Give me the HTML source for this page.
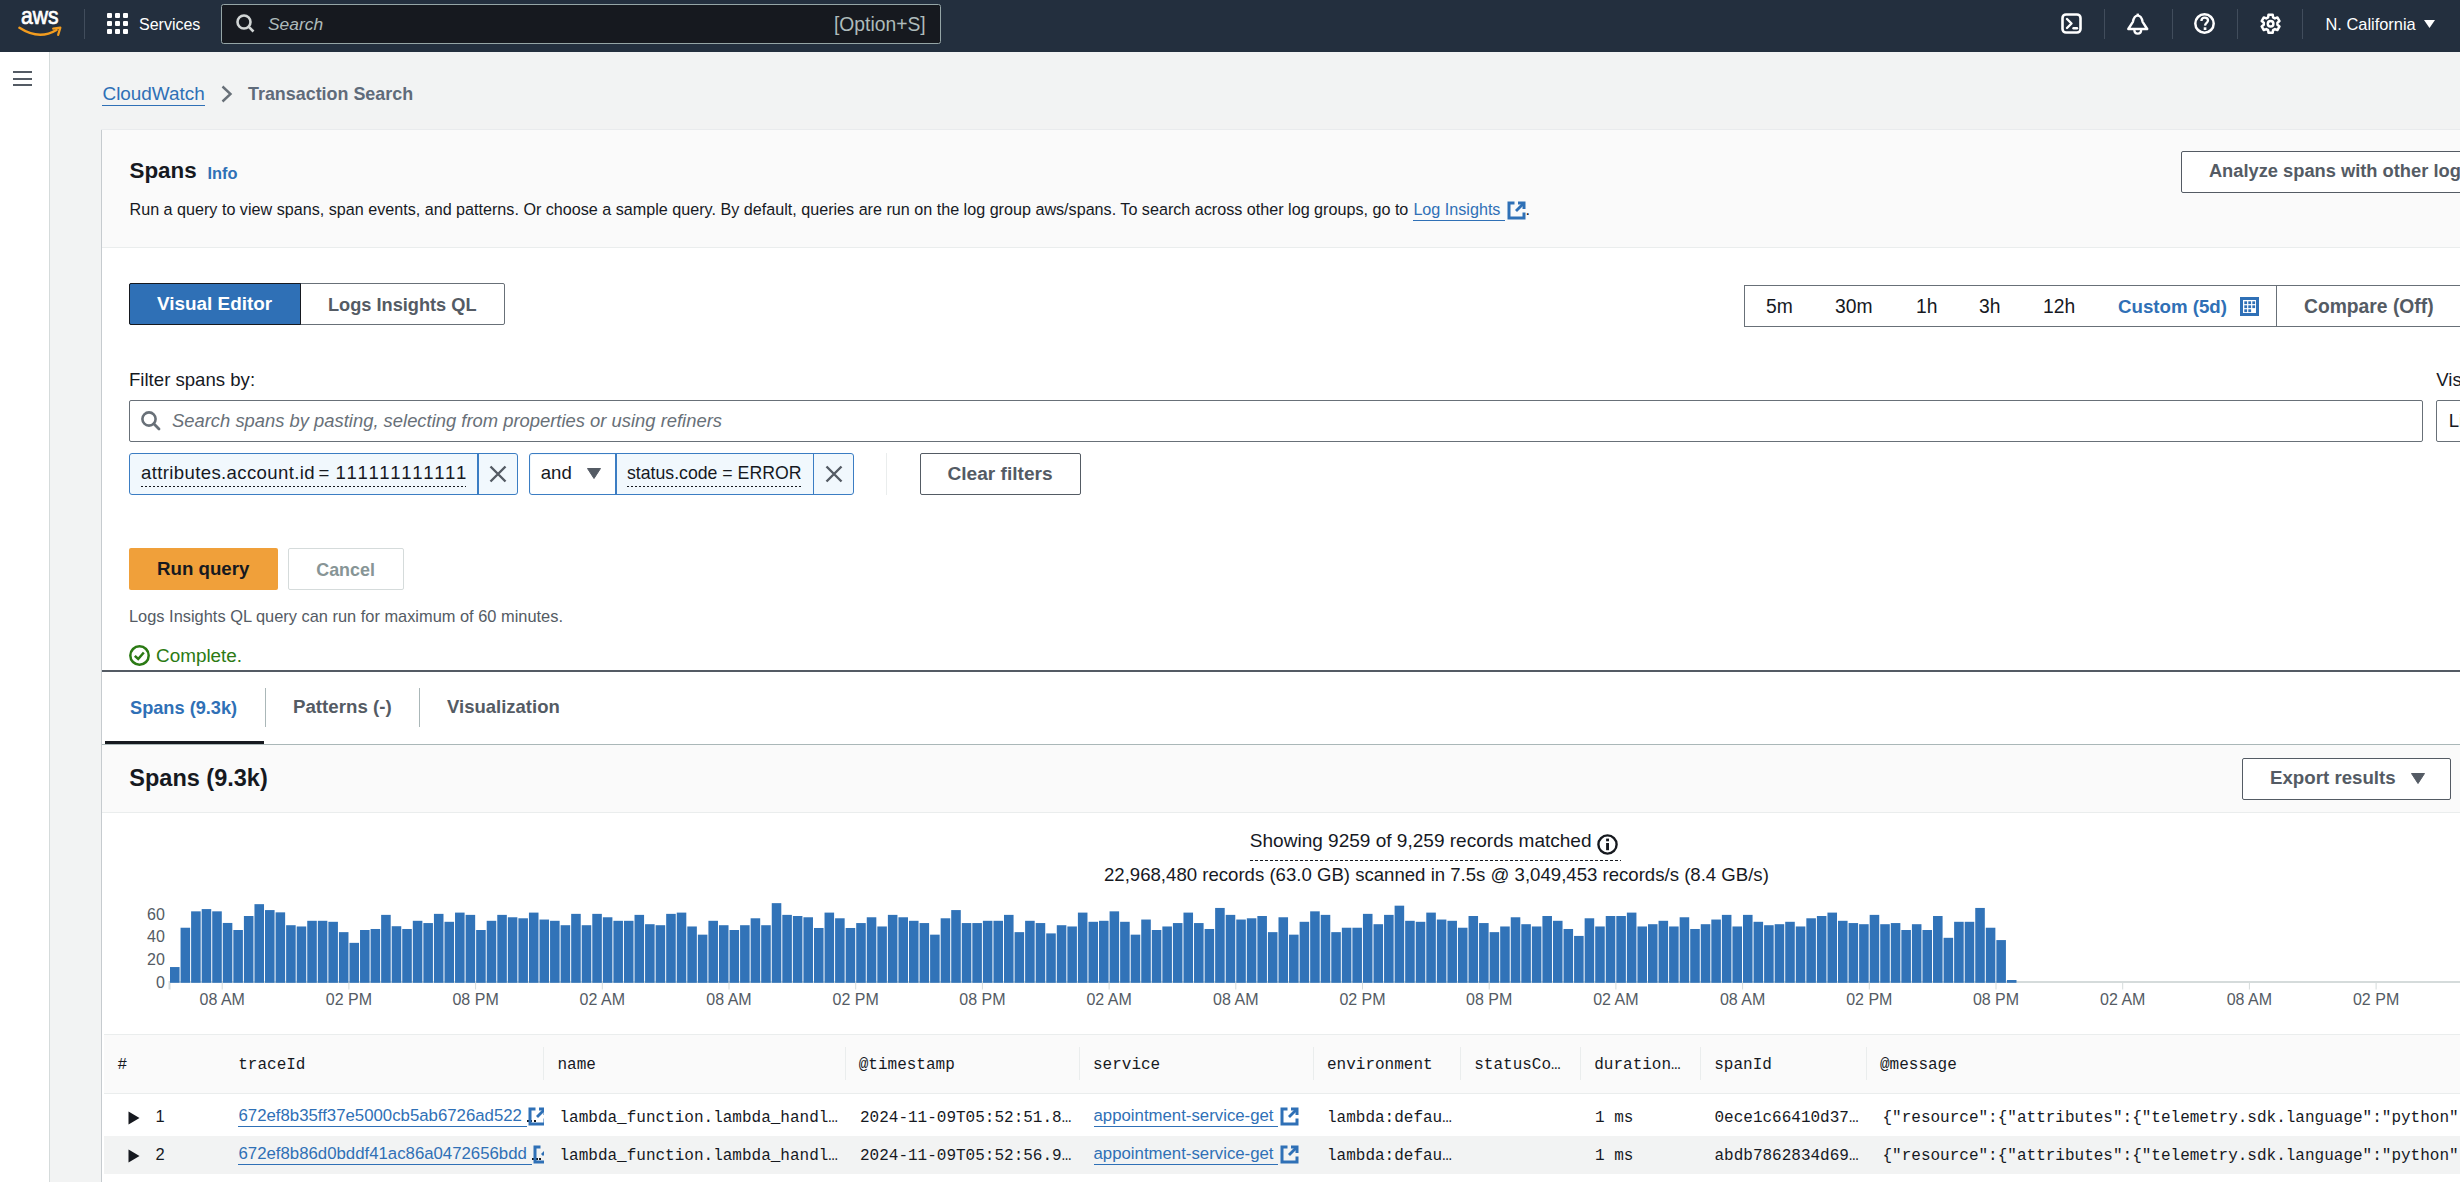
<!DOCTYPE html>
<html><head><meta charset="utf-8"><title>CloudWatch - Transaction Search</title>
<style>
html,body{margin:0;padding:0;width:2460px;height:1182px;overflow:hidden;background:#f2f3f3}
.r{position:absolute;display:block}
.t{position:absolute;white-space:pre;font-family:'Liberation Sans', sans-serif}
</style></head><body>
<div class="r" style="left:0px;top:0px;width:2460px;height:1182px;background:#f2f3f3"></div>
<div class="r" style="left:0px;top:52px;width:49px;height:1130px;background:#ffffff"></div>
<div class="r" style="left:49px;top:52px;width:1px;height:1130px;background:#d5dbdb"></div>
<div class="r" style="left:13px;top:71px;width:19px;height:2px;background:#545b64"></div>
<div class="r" style="left:13px;top:77.6px;width:19px;height:2px;background:#545b64"></div>
<div class="r" style="left:13px;top:84.4px;width:19px;height:2px;background:#545b64"></div>
<div class="r" style="left:0px;top:0px;width:2460px;height:52px;background:#232f3e"></div>
<svg class="r" style="left:17px;top:8px;" width="48" height="32" viewBox="0 0 48 32"><text x="4" y="16" font-family="Liberation Sans" font-size="23.5" fill="#ffffff" stroke="#ffffff" stroke-width="0.7" textLength="37.5" lengthAdjust="spacingAndGlyphs">aws</text>
<path d="M2.5 19.8 Q22 32.5 39.5 22" stroke="#f29c1f" stroke-width="2.5" fill="none" stroke-linecap="round"/>
<path d="M36.2 20.6 L43.3 19.6 L41.2 26.8" stroke="#f29c1f" stroke-width="2.3" fill="none" stroke-linecap="round" stroke-linejoin="round"/></svg>
<div class="r" style="left:84px;top:9px;width:1px;height:30px;background:#414d5c"></div>
<div class="r" style="left:107px;top:13px;width:5px;height:5px;background:#ffffff;border-radius:1px"></div>
<div class="r" style="left:107px;top:21px;width:5px;height:5px;background:#ffffff;border-radius:1px"></div>
<div class="r" style="left:107px;top:29px;width:5px;height:5px;background:#ffffff;border-radius:1px"></div>
<div class="r" style="left:115px;top:13px;width:5px;height:5px;background:#ffffff;border-radius:1px"></div>
<div class="r" style="left:115px;top:21px;width:5px;height:5px;background:#ffffff;border-radius:1px"></div>
<div class="r" style="left:115px;top:29px;width:5px;height:5px;background:#ffffff;border-radius:1px"></div>
<div class="r" style="left:123px;top:13px;width:5px;height:5px;background:#ffffff;border-radius:1px"></div>
<div class="r" style="left:123px;top:21px;width:5px;height:5px;background:#ffffff;border-radius:1px"></div>
<div class="r" style="left:123px;top:29px;width:5px;height:5px;background:#ffffff;border-radius:1px"></div>
<div class="t" style="left:139.00px;top:16.50px;font-size:16px;line-height:16px;color:#ffffff;font-weight:normal;font-family:'Liberation Sans', sans-serif;">Services</div>
<div class="r" style="left:221px;top:4px;width:719.5px;height:39.5px;background:#16191f;border:1px solid #95a5a6;border-radius:2.5px;box-sizing:border-box"></div>
<svg class="r" style="left:235px;top:13px;" width="22" height="22" viewBox="0 0 22 22"><circle cx="9" cy="9" r="6.5" stroke="#d1d5d5" stroke-width="2.6" fill="none"/><path d="M13.8 13.8 L18.5 18.5" stroke="#d1d5d5" stroke-width="2.6"/></svg>
<div class="t" style="left:268.00px;top:16.30px;font-size:17.4px;line-height:17.4px;color:#aebbbb;font-weight:normal;font-family:'Liberation Sans', sans-serif;font-style:italic;">Search</div>
<div class="t" style="left:834.00px;top:14.85px;font-size:19.3px;line-height:19.3px;color:#aebbbb;font-weight:normal;font-family:'Liberation Sans', sans-serif;">[Option+S]</div>
<svg class="r" style="left:2061px;top:13px;" width="21" height="21" viewBox="0 0 21 21"><rect x="1.5" y="1.5" width="18" height="18" rx="3.5" stroke="#fff" stroke-width="2.6" fill="none"/><path d="M6 6 L10.5 10.5 L6 15" stroke="#fff" stroke-width="2.4" fill="none" stroke-linecap="round" stroke-linejoin="round"/><path d="M12.5 15.2 L16 15.2" stroke="#fff" stroke-width="2.4" stroke-linecap="round"/></svg>
<div class="r" style="left:2104px;top:9px;width:1px;height:30px;background:#414d5c"></div>
<svg class="r" style="left:2127px;top:13px;" width="22" height="22" viewBox="0 0 22 22"><path d="M1.3 16 L20.2 16 L15.6 8.8 C14.8 4.6 13.3 2.6 10.75 2.6 C8.2 2.6 6.7 4.6 5.9 8.8 Z" stroke="#fff" stroke-width="2.4" fill="none" stroke-linejoin="round"/><path d="M10.75 0.6 L10.75 2.6" stroke="#fff" stroke-width="2.4"/><path d="M7.3 16.5 C7.3 19.7 8.9 20.6 10.75 20.6 C12.6 20.6 14.2 19.7 14.2 16.5" stroke="#fff" stroke-width="2.3" fill="none"/></svg>
<div class="r" style="left:2172px;top:9px;width:1px;height:30px;background:#414d5c"></div>
<svg class="r" style="left:2194px;top:13px;" width="22" height="22" viewBox="0 0 22 22"><circle cx="10.5" cy="10.5" r="9.2" stroke="#fff" stroke-width="2.5" fill="none"/><path d="M7.4 8 C7.4 5.9 9 4.6 10.8 4.6 C12.7 4.6 14 5.9 14 7.6 C14 9.8 11.2 10.1 11 12.6" stroke="#fff" stroke-width="2.3" fill="none"/><rect x="9.7" y="14.3" width="2.7" height="2.7" fill="#fff"/></svg>
<div class="r" style="left:2237px;top:9px;width:1px;height:30px;background:#414d5c"></div>
<svg class="r" style="left:2260px;top:13px;" width="22" height="22" viewBox="0 0 22 22"><path d="M8.51 1.69 L12.69 1.69 L13.07 4.31 L14.94 5.39 L17.40 4.41 L19.49 8.03 L17.42 9.67 L17.42 11.83 L19.49 13.47 L17.40 17.09 L14.94 16.11 L13.07 17.19 L12.69 19.81 L8.51 19.81 L8.13 17.19 L6.26 16.11 L3.80 17.09 L1.71 13.47 L3.78 11.83 L3.78 9.67 L1.71 8.03 L3.80 4.41 L6.26 5.39 L8.13 4.31 Z" stroke="#fff" stroke-width="2.5" fill="none" stroke-linejoin="round"/><circle cx="10.6" cy="10.75" r="2.8" stroke="#fff" stroke-width="2.5" fill="none"/></svg>
<div class="r" style="left:2302px;top:9px;width:1px;height:30px;background:#414d5c"></div>
<div class="t" style="left:2325.50px;top:15.80px;font-size:16.4px;line-height:16.4px;color:#ffffff;font-weight:normal;font-family:'Liberation Sans', sans-serif;">N. California</div>
<svg class="r" style="left:2424px;top:20px;" width="11" height="8" viewBox="0 0 11 8"><path d="M0 0 L11 0 L5.5 8 Z" fill="#fff"/></svg>
<div class="t" style="left:102.50px;top:84.65px;font-size:18.9px;line-height:18.9px;color:#2f70b6;font-weight:normal;font-family:'Liberation Sans', sans-serif;">CloudWatch</div>
<div class="r" style="left:102px;top:104.5px;width:103px;height:1.5px;background:#2f70b6"></div>
<svg class="r" style="left:220px;top:85px;" width="14" height="18" viewBox="0 0 14 18"><path d="M2.5 1.5 L10.5 9 L2.5 16.5" stroke="#687078" stroke-width="2.4" fill="none"/></svg>
<div class="t" style="left:248.00px;top:85.65px;font-size:17.9px;line-height:17.9px;color:#5f6b7a;font-weight:bold;font-family:'Liberation Sans', sans-serif;">Transaction Search</div>
<div class="r" style="left:101px;top:130px;width:2359px;height:1052px;background:#ffffff"></div>
<div class="r" style="left:101px;top:129px;width:2359px;height:1px;background:#e9ebed"></div>
<div class="r" style="left:101px;top:130px;width:1px;height:1052px;background:#c6cbcf"></div>
<div class="r" style="left:102px;top:130px;width:2358px;height:117px;background:#fafafa"></div>
<div class="r" style="left:102px;top:247px;width:2358px;height:1px;background:#eaeded"></div>
<div class="t" style="left:129.50px;top:160.30px;font-size:22.4px;line-height:22.4px;color:#16191f;font-weight:bold;font-family:'Liberation Sans', sans-serif;">Spans</div>
<div class="t" style="left:207.50px;top:164.80px;font-size:16.4px;line-height:16.4px;color:#2f70b6;font-weight:bold;font-family:'Liberation Sans', sans-serif;">Info</div>
<div class="t" style="left:129.50px;top:200.93px;font-size:16.15px;line-height:16.15px;color:#16191f;font-weight:normal;font-family:'Liberation Sans', sans-serif;">Run a query to view spans, span events, and patterns. Or choose a sample query. By default, queries are run on the log group aws/spans. To search across other log groups, go to</div>
<div class="t" style="left:1413.40px;top:200.93px;font-size:16.15px;line-height:16.15px;color:#2f70b6;font-weight:normal;font-family:'Liberation Sans', sans-serif;">Log Insights</div>
<div class="r" style="left:1413px;top:219.5px;width:92px;height:1.5px;background:#2f70b6"></div>
<svg class="r" style="left:1506.5px;top:200.5px;" width="19" height="19" viewBox="0 0 19 19"><path d="M7.5 2 L2 2 L2 17 L17 17 L17 11.5" stroke="#2f70b6" stroke-width="3" fill="none"/><path d="M11 2 L17 2 L17 8" stroke="#2f70b6" stroke-width="3" fill="none"/><path d="M16.5 2.5 L9 10" stroke="#2f70b6" stroke-width="2.8"/></svg>
<div class="t" style="left:1525.50px;top:200.93px;font-size:16.15px;line-height:16.15px;color:#16191f;font-weight:normal;font-family:'Liberation Sans', sans-serif;">.</div>
<div class="r" style="left:2181px;top:151px;width:300px;height:42px;background:#ffffff;border:1.5px solid #545b64;border-radius:2px;box-sizing:border-box"></div>
<div class="t" style="left:2208.90px;top:161.85px;font-size:18.3px;line-height:18.3px;color:#545b64;font-weight:bold;font-family:'Liberation Sans', sans-serif;">Analyze spans with other log groups</div>
<div class="r" style="left:129px;top:283px;width:376px;height:42px;background:#ffffff;border:1.5px solid #687078;border-radius:2px;box-sizing:border-box"></div>
<div class="r" style="left:129px;top:283px;width:172px;height:42px;background:#2f70b6;border:1.5px solid #16191f;border-radius:2px 0 0 2px;box-sizing:border-box"></div>
<div class="t" style="left:157.00px;top:295.05px;font-size:18.9px;line-height:18.9px;color:#ffffff;font-weight:bold;font-family:'Liberation Sans', sans-serif;">Visual Editor</div>
<div class="t" style="left:328.00px;top:295.90px;font-size:18.2px;line-height:18.2px;color:#545b64;font-weight:bold;font-family:'Liberation Sans', sans-serif;">Logs Insights QL</div>
<div class="r" style="left:1744px;top:285px;width:533px;height:42px;background:#ffffff;border:1.5px solid #687078;box-sizing:border-box"></div>
<div class="t" style="left:1766.00px;top:297.45px;font-size:19.3px;line-height:19.3px;color:#16191f;font-weight:normal;font-family:'Liberation Sans', sans-serif;">5m</div>
<div class="t" style="left:1835.00px;top:297.45px;font-size:19.3px;line-height:19.3px;color:#16191f;font-weight:normal;font-family:'Liberation Sans', sans-serif;">30m</div>
<div class="t" style="left:1916.00px;top:297.45px;font-size:19.3px;line-height:19.3px;color:#16191f;font-weight:normal;font-family:'Liberation Sans', sans-serif;">1h</div>
<div class="t" style="left:1979.00px;top:297.45px;font-size:19.3px;line-height:19.3px;color:#16191f;font-weight:normal;font-family:'Liberation Sans', sans-serif;">3h</div>
<div class="t" style="left:2043.00px;top:297.45px;font-size:19.3px;line-height:19.3px;color:#16191f;font-weight:normal;font-family:'Liberation Sans', sans-serif;">12h</div>
<div class="t" style="left:2118.00px;top:297.75px;font-size:18.7px;line-height:18.7px;color:#2f70b6;font-weight:bold;font-family:'Liberation Sans', sans-serif;">Custom (5d)</div>
<svg class="r" style="left:2240px;top:297px;" width="19" height="19" viewBox="0 0 19 19"><rect x="1.5" y="1.5" width="16" height="16" stroke="#2f70b6" stroke-width="3" fill="none"/><rect x="4.3" y="4.3" width="2.8" height="2.8" fill="#2f70b6"/><rect x="8.3" y="4.3" width="2.8" height="2.8" fill="#2f70b6"/><rect x="12.3" y="4.3" width="2.8" height="2.8" fill="#2f70b6"/><rect x="4.3" y="8.3" width="2.8" height="2.8" fill="#2f70b6"/><rect x="8.3" y="8.3" width="2.8" height="2.8" fill="#2f70b6"/><rect x="12.3" y="8.3" width="2.8" height="2.8" fill="#2f70b6"/><rect x="4.3" y="12.3" width="2.8" height="2.8" fill="#2f70b6"/><rect x="8.3" y="12.3" width="2.8" height="2.8" fill="#2f70b6"/></svg>
<div class="r" style="left:2276px;top:285px;width:200px;height:42px;background:#ffffff;border:1.5px solid #687078;box-sizing:border-box"></div>
<div class="t" style="left:2304.00px;top:297.45px;font-size:19.3px;line-height:19.3px;color:#545b64;font-weight:bold;font-family:'Liberation Sans', sans-serif;">Compare (Off)</div>
<div class="t" style="left:129.00px;top:370.50px;font-size:18.6px;line-height:18.6px;color:#16191f;font-weight:normal;font-family:'Liberation Sans', sans-serif;">Filter spans by:</div>
<div class="t" style="left:2436.30px;top:370.50px;font-size:18.6px;line-height:18.6px;color:#16191f;font-weight:normal;font-family:'Liberation Sans', sans-serif;">Visualization</div>
<div class="r" style="left:129px;top:400px;width:2294px;height:42px;background:#ffffff;border:1.5px solid #687078;border-radius:2px;box-sizing:border-box"></div>
<svg class="r" style="left:140px;top:410px;" width="22" height="22" viewBox="0 0 22 22"><circle cx="9" cy="9" r="6.6" stroke="#687078" stroke-width="2.6" fill="none"/><path d="M13.8 13.8 L19 19" stroke="#687078" stroke-width="2.8" stroke-linecap="round"/></svg>
<div class="t" style="left:172.00px;top:412.30px;font-size:18.4px;line-height:18.4px;color:#687078;font-weight:normal;font-family:'Liberation Sans', sans-serif;font-style:italic;">Search spans by pasting, selecting from properties or using refiners</div>
<div class="r" style="left:2436px;top:400px;width:100px;height:42px;background:#ffffff;border:1.5px solid #687078;border-radius:2px;box-sizing:border-box"></div>
<div class="t" style="left:2448.70px;top:412.20px;font-size:18.6px;line-height:18.6px;color:#16191f;font-weight:normal;font-family:'Liberation Sans', sans-serif;">Line</div>
<div class="r" style="left:129px;top:453px;width:389px;height:42px;background:#f1f8fd;border:1.5px solid #3b7dc3;border-radius:3px;box-sizing:border-box"></div>
<div class="r" style="left:477px;top:453px;width:1.5px;height:42px;background:#3b7dc3"></div>
<div class="t" style="left:141.00px;top:463.70px;font-size:18.6px;line-height:18.6px;color:#16191f;font-weight:normal;font-family:'Liberation Sans', sans-serif;letter-spacing:0.36px;">attributes.account.id</div>
<div class="t" style="left:318.60px;top:463.70px;font-size:18.6px;line-height:18.6px;color:#16191f;font-weight:normal;font-family:'Liberation Sans', sans-serif;">=</div>
<div class="t" style="left:335.50px;top:463.70px;font-size:18.6px;line-height:18.6px;color:#16191f;font-weight:normal;font-family:'Liberation Sans', sans-serif;letter-spacing:0.62px;font-kerning:none;">111111111111</div>
<div class="r" style="left:141px;top:485.5px;width:325px;height:1.2px;background:repeating-linear-gradient(90deg,#16191f 0 2.4px,transparent 2.4px 4px)"></div>
<svg class="r" style="left:488.5px;top:464.5px;" width="18" height="18" viewBox="0 0 18 18"><path d="M1.5 1.5 L16.5 16.5 M16.5 1.5 L1.5 16.5" stroke="#545b64" stroke-width="2.4"/></svg>
<div class="r" style="left:529px;top:453px;width:325px;height:42px;background:#f1f8fd;border:1.5px solid #3b7dc3;border-radius:3px;box-sizing:border-box"></div>
<div class="r" style="left:530.5px;top:454.5px;width:85px;height:39px;background:#ffffff;border-radius:2px 0 0 2px"></div>
<div class="r" style="left:615px;top:453px;width:1.5px;height:42px;background:#3b7dc3"></div>
<div class="r" style="left:812.5px;top:453px;width:1.5px;height:42px;background:#3b7dc3"></div>
<div class="t" style="left:540.75px;top:464.20px;font-size:18.6px;line-height:18.6px;color:#16191f;font-weight:normal;font-family:'Liberation Sans', sans-serif;">and</div>
<svg class="r" style="left:587px;top:468px;" width="14" height="11" viewBox="0 0 14 11"><path d="M0.5 0.5 L13.5 0.5 L7 10.5 Z" fill="#545b64" stroke="#545b64" stroke-linejoin="round"/></svg>
<div class="t" style="left:627.00px;top:465.15px;font-size:17.7px;line-height:17.7px;color:#16191f;font-weight:normal;font-family:'Liberation Sans', sans-serif;">status.code = ERROR</div>
<div class="r" style="left:627px;top:485.5px;width:175px;height:1.2px;background:repeating-linear-gradient(90deg,#16191f 0 2.4px,transparent 2.4px 4px)"></div>
<svg class="r" style="left:824.5px;top:464.5px;" width="18" height="18" viewBox="0 0 18 18"><path d="M1.5 1.5 L16.5 16.5 M16.5 1.5 L1.5 16.5" stroke="#545b64" stroke-width="2.4"/></svg>
<div class="r" style="left:886px;top:453px;width:1px;height:42px;background:#eaeded"></div>
<div class="r" style="left:919.5px;top:453px;width:161px;height:41.5px;background:#ffffff;border:1.5px solid #545b64;border-radius:2px;box-sizing:border-box"></div>
<div class="t" style="left:947.50px;top:463.95px;font-size:19.1px;line-height:19.1px;color:#545b64;font-weight:bold;font-family:'Liberation Sans', sans-serif;">Clear filters</div>
<div class="r" style="left:129px;top:548px;width:149px;height:42px;background:#f0a03a;border-radius:2px"></div>
<div class="t" style="left:157.00px;top:560.40px;font-size:18.7px;line-height:18.7px;color:#16191f;font-weight:bold;font-family:'Liberation Sans', sans-serif;">Run query</div>
<div class="r" style="left:288px;top:548px;width:116px;height:42px;background:#ffffff;border:1.5px solid #d5dbdb;border-radius:2px;box-sizing:border-box"></div>
<div class="t" style="left:316.25px;top:562.05px;font-size:17.9px;line-height:17.9px;color:#879596;font-weight:bold;font-family:'Liberation Sans', sans-serif;">Cancel</div>
<div class="t" style="left:129.00px;top:608.30px;font-size:16.4px;line-height:16.4px;color:#545b64;font-weight:normal;font-family:'Liberation Sans', sans-serif;">Logs Insights QL query can run for maximum of 60 minutes.</div>
<svg class="r" style="left:129px;top:645px;" width="21" height="21" viewBox="0 0 21 21"><circle cx="10.5" cy="10.5" r="9.2" stroke="#2b7a14" stroke-width="2.5" fill="none"/><path d="M5.8 10.8 L9.2 14 L14.8 7.5" stroke="#2b7a14" stroke-width="2.5" fill="none"/></svg>
<div class="t" style="left:156.00px;top:646.55px;font-size:18.9px;line-height:18.9px;color:#2b7a14;font-weight:normal;font-family:'Liberation Sans', sans-serif;">Complete.</div>
<div class="r" style="left:102px;top:670px;width:2358px;height:1.5px;background:#545b64"></div>
<div class="t" style="left:130.00px;top:698.65px;font-size:18.2px;line-height:18.2px;color:#2f70b6;font-weight:bold;font-family:'Liberation Sans', sans-serif;">Spans (9.3k)</div>
<div class="r" style="left:265px;top:688px;width:1px;height:39px;background:#aab7b8"></div>
<div class="t" style="left:293.00px;top:697.90px;font-size:18.7px;line-height:18.7px;color:#545b64;font-weight:bold;font-family:'Liberation Sans', sans-serif;">Patterns (-)</div>
<div class="r" style="left:419px;top:688px;width:1px;height:39px;background:#aab7b8"></div>
<div class="t" style="left:447.00px;top:698.00px;font-size:18.5px;line-height:18.5px;color:#545b64;font-weight:bold;font-family:'Liberation Sans', sans-serif;">Visualization</div>
<div class="r" style="left:102px;top:744px;width:2358px;height:1px;background:#aab7b8"></div>
<div class="r" style="left:105px;top:741px;width:159px;height:3px;background:#16191f"></div>
<div class="r" style="left:102px;top:745px;width:2358px;height:67px;background:#fafafa"></div>
<div class="r" style="left:102px;top:812px;width:2358px;height:1px;background:#eaeded"></div>
<div class="t" style="left:129.30px;top:766.65px;font-size:23.5px;line-height:23.5px;color:#16191f;font-weight:bold;font-family:'Liberation Sans', sans-serif;">Spans (9.3k)</div>
<div class="r" style="left:2242px;top:758px;width:209px;height:42px;background:#ffffff;border:1.5px solid #545b64;border-radius:2px;box-sizing:border-box"></div>
<div class="t" style="left:2270.00px;top:768.85px;font-size:18.7px;line-height:18.7px;color:#545b64;font-weight:bold;font-family:'Liberation Sans', sans-serif;">Export results</div>
<svg class="r" style="left:2411px;top:773px;" width="14" height="11" viewBox="0 0 14 11"><path d="M0.5 0.5 L13.5 0.5 L7 10.5 Z" fill="#545b64" stroke="#545b64" stroke-linejoin="round"/></svg>
<div class="t" style="left:1249.80px;top:830.77px;font-size:19.05px;line-height:19.05px;color:#16191f;font-weight:normal;font-family:'Liberation Sans', sans-serif;">Showing 9259 of 9,259 records matched</div>
<div class="r" style="left:1250px;top:860px;width:371px;height:1.4px;background:repeating-linear-gradient(90deg,#16191f 0 3px,transparent 3px 5px)"></div>
<svg class="r" style="left:1597px;top:834px;" width="21" height="21" viewBox="0 0 21 21"><circle cx="10.5" cy="10.5" r="9.1" stroke="#16191f" stroke-width="2.4" fill="none"/><rect x="9.1" y="4.6" width="2.9" height="2.7" fill="#16191f"/><rect x="9.1" y="9" width="2.9" height="7.2" fill="#16191f"/></svg>
<div class="t" style="left:1104.00px;top:866.20px;font-size:18.6px;line-height:18.6px;color:#16191f;font-weight:normal;font-family:'Liberation Sans', sans-serif;">22,968,480 records (63.0 GB) scanned in 7.5s @ 3,049,453 records/s (8.4 GB/s)</div>
<svg class="r" style="left:0;top:0" width="2460" height="1182"><rect x="170" y="981" width="2290" height="2" fill="#d5dbdb"/><rect x="168.5" y="981" width="2" height="8.5" fill="#d5dbdb"/><rect x="221.70" y="983" width="1" height="6.5" fill="#d5dbdb"/><rect x="348.40" y="983" width="1" height="6.5" fill="#d5dbdb"/><rect x="475.10" y="983" width="1" height="6.5" fill="#d5dbdb"/><rect x="601.80" y="983" width="1" height="6.5" fill="#d5dbdb"/><rect x="728.50" y="983" width="1" height="6.5" fill="#d5dbdb"/><rect x="855.20" y="983" width="1" height="6.5" fill="#d5dbdb"/><rect x="981.90" y="983" width="1" height="6.5" fill="#d5dbdb"/><rect x="1108.60" y="983" width="1" height="6.5" fill="#d5dbdb"/><rect x="1235.30" y="983" width="1" height="6.5" fill="#d5dbdb"/><rect x="1362.00" y="983" width="1" height="6.5" fill="#d5dbdb"/><rect x="1488.70" y="983" width="1" height="6.5" fill="#d5dbdb"/><rect x="1615.40" y="983" width="1" height="6.5" fill="#d5dbdb"/><rect x="1742.10" y="983" width="1" height="6.5" fill="#d5dbdb"/><rect x="1868.80" y="983" width="1" height="6.5" fill="#d5dbdb"/><rect x="1995.50" y="983" width="1" height="6.5" fill="#d5dbdb"/><rect x="2122.20" y="983" width="1" height="6.5" fill="#d5dbdb"/><rect x="2248.90" y="983" width="1" height="6.5" fill="#d5dbdb"/><rect x="2375.60" y="983" width="1" height="6.5" fill="#d5dbdb"/><rect x="170.00" y="967.05" width="9.56" height="15.75" fill="#3173b8"/><rect x="180.56" y="927.73" width="9.56" height="55.07" fill="#3173b8"/><rect x="191.11" y="911.34" width="9.56" height="71.46" fill="#3173b8"/><rect x="201.67" y="909.08" width="9.56" height="73.72" fill="#3173b8"/><rect x="212.23" y="911.34" width="9.56" height="71.46" fill="#3173b8"/><rect x="222.78" y="922.94" width="9.56" height="59.86" fill="#3173b8"/><rect x="233.34" y="930.00" width="9.56" height="52.80" fill="#3173b8"/><rect x="243.90" y="916.01" width="9.56" height="66.79" fill="#3173b8"/><rect x="254.46" y="904.16" width="9.56" height="78.64" fill="#3173b8"/><rect x="265.01" y="910.08" width="9.56" height="72.72" fill="#3173b8"/><rect x="275.57" y="912.35" width="9.56" height="70.45" fill="#3173b8"/><rect x="286.13" y="925.21" width="9.56" height="57.59" fill="#3173b8"/><rect x="296.68" y="926.47" width="9.56" height="56.33" fill="#3173b8"/><rect x="307.24" y="920.80" width="9.56" height="62.00" fill="#3173b8"/><rect x="317.80" y="920.80" width="9.56" height="62.00" fill="#3173b8"/><rect x="328.36" y="921.80" width="9.56" height="61.00" fill="#3173b8"/><rect x="338.91" y="932.14" width="9.56" height="50.66" fill="#3173b8"/><rect x="349.47" y="942.85" width="9.56" height="39.95" fill="#3173b8"/><rect x="360.03" y="930.00" width="9.56" height="52.80" fill="#3173b8"/><rect x="370.58" y="928.99" width="9.56" height="53.81" fill="#3173b8"/><rect x="381.14" y="914.87" width="9.56" height="67.93" fill="#3173b8"/><rect x="391.70" y="926.22" width="9.56" height="56.58" fill="#3173b8"/><rect x="402.25" y="928.99" width="9.56" height="53.81" fill="#3173b8"/><rect x="412.81" y="920.80" width="9.56" height="62.00" fill="#3173b8"/><rect x="423.37" y="923.06" width="9.56" height="59.74" fill="#3173b8"/><rect x="433.93" y="913.86" width="9.56" height="68.94" fill="#3173b8"/><rect x="444.48" y="921.80" width="9.56" height="61.00" fill="#3173b8"/><rect x="455.04" y="912.60" width="9.56" height="70.20" fill="#3173b8"/><rect x="465.60" y="914.87" width="9.56" height="67.93" fill="#3173b8"/><rect x="476.15" y="930.00" width="9.56" height="52.80" fill="#3173b8"/><rect x="486.71" y="920.80" width="9.56" height="62.00" fill="#3173b8"/><rect x="497.27" y="914.87" width="9.56" height="67.93" fill="#3173b8"/><rect x="507.82" y="917.27" width="9.56" height="65.53" fill="#3173b8"/><rect x="518.38" y="918.28" width="9.56" height="64.52" fill="#3173b8"/><rect x="528.94" y="912.60" width="9.56" height="70.20" fill="#3173b8"/><rect x="539.50" y="919.54" width="9.56" height="63.26" fill="#3173b8"/><rect x="550.05" y="920.80" width="9.56" height="62.00" fill="#3173b8"/><rect x="560.61" y="925.21" width="9.56" height="57.59" fill="#3173b8"/><rect x="571.17" y="913.86" width="9.56" height="68.94" fill="#3173b8"/><rect x="581.72" y="925.21" width="9.56" height="57.59" fill="#3173b8"/><rect x="592.28" y="913.86" width="9.56" height="68.94" fill="#3173b8"/><rect x="602.84" y="917.27" width="9.56" height="65.53" fill="#3173b8"/><rect x="613.39" y="920.80" width="9.56" height="62.00" fill="#3173b8"/><rect x="623.95" y="920.80" width="9.56" height="62.00" fill="#3173b8"/><rect x="634.51" y="914.87" width="9.56" height="67.93" fill="#3173b8"/><rect x="645.07" y="924.20" width="9.56" height="58.60" fill="#3173b8"/><rect x="655.62" y="925.21" width="9.56" height="57.59" fill="#3173b8"/><rect x="666.18" y="913.86" width="9.56" height="68.94" fill="#3173b8"/><rect x="676.74" y="912.60" width="9.56" height="70.20" fill="#3173b8"/><rect x="687.29" y="926.47" width="9.56" height="56.33" fill="#3173b8"/><rect x="697.85" y="934.66" width="9.56" height="48.14" fill="#3173b8"/><rect x="708.41" y="920.80" width="9.56" height="62.00" fill="#3173b8"/><rect x="718.96" y="925.21" width="9.56" height="57.59" fill="#3173b8"/><rect x="729.52" y="930.00" width="9.56" height="52.80" fill="#3173b8"/><rect x="740.08" y="925.21" width="9.56" height="57.59" fill="#3173b8"/><rect x="750.63" y="918.28" width="9.56" height="64.52" fill="#3173b8"/><rect x="761.19" y="925.21" width="9.56" height="57.59" fill="#3173b8"/><rect x="771.75" y="903.15" width="9.56" height="79.65" fill="#3173b8"/><rect x="782.31" y="914.87" width="9.56" height="67.93" fill="#3173b8"/><rect x="792.86" y="916.01" width="9.56" height="66.79" fill="#3173b8"/><rect x="803.42" y="917.27" width="9.56" height="65.53" fill="#3173b8"/><rect x="813.98" y="927.98" width="9.56" height="54.82" fill="#3173b8"/><rect x="824.53" y="912.60" width="9.56" height="70.20" fill="#3173b8"/><rect x="835.09" y="918.28" width="9.56" height="64.52" fill="#3173b8"/><rect x="845.65" y="927.98" width="9.56" height="54.82" fill="#3173b8"/><rect x="856.21" y="923.06" width="9.56" height="59.74" fill="#3173b8"/><rect x="866.76" y="917.27" width="9.56" height="65.53" fill="#3173b8"/><rect x="877.32" y="926.47" width="9.56" height="56.33" fill="#3173b8"/><rect x="887.88" y="914.87" width="9.56" height="67.93" fill="#3173b8"/><rect x="898.43" y="917.27" width="9.56" height="65.53" fill="#3173b8"/><rect x="908.99" y="920.80" width="9.56" height="62.00" fill="#3173b8"/><rect x="919.55" y="923.06" width="9.56" height="59.74" fill="#3173b8"/><rect x="930.10" y="934.66" width="9.56" height="48.14" fill="#3173b8"/><rect x="940.66" y="918.28" width="9.56" height="64.52" fill="#3173b8"/><rect x="951.22" y="910.08" width="9.56" height="72.72" fill="#3173b8"/><rect x="961.77" y="923.06" width="9.56" height="59.74" fill="#3173b8"/><rect x="972.33" y="923.06" width="9.56" height="59.74" fill="#3173b8"/><rect x="982.89" y="920.80" width="9.56" height="62.00" fill="#3173b8"/><rect x="993.45" y="920.80" width="9.56" height="62.00" fill="#3173b8"/><rect x="1004.00" y="914.87" width="9.56" height="67.93" fill="#3173b8"/><rect x="1014.56" y="932.14" width="9.56" height="50.66" fill="#3173b8"/><rect x="1025.12" y="920.80" width="9.56" height="62.00" fill="#3173b8"/><rect x="1035.67" y="923.06" width="9.56" height="59.74" fill="#3173b8"/><rect x="1046.23" y="933.40" width="9.56" height="49.40" fill="#3173b8"/><rect x="1056.79" y="925.21" width="9.56" height="57.59" fill="#3173b8"/><rect x="1067.35" y="926.47" width="9.56" height="56.33" fill="#3173b8"/><rect x="1077.90" y="912.60" width="9.56" height="70.20" fill="#3173b8"/><rect x="1088.46" y="921.80" width="9.56" height="61.00" fill="#3173b8"/><rect x="1099.02" y="920.80" width="9.56" height="62.00" fill="#3173b8"/><rect x="1109.57" y="911.34" width="9.56" height="71.46" fill="#3173b8"/><rect x="1120.13" y="921.80" width="9.56" height="61.00" fill="#3173b8"/><rect x="1130.69" y="934.66" width="9.56" height="48.14" fill="#3173b8"/><rect x="1141.24" y="919.54" width="9.56" height="63.26" fill="#3173b8"/><rect x="1151.80" y="930.00" width="9.56" height="52.80" fill="#3173b8"/><rect x="1162.36" y="926.47" width="9.56" height="56.33" fill="#3173b8"/><rect x="1172.91" y="923.06" width="9.56" height="59.74" fill="#3173b8"/><rect x="1183.47" y="912.60" width="9.56" height="70.20" fill="#3173b8"/><rect x="1194.03" y="923.06" width="9.56" height="59.74" fill="#3173b8"/><rect x="1204.59" y="928.99" width="9.56" height="53.81" fill="#3173b8"/><rect x="1215.14" y="907.94" width="9.56" height="74.86" fill="#3173b8"/><rect x="1225.70" y="914.87" width="9.56" height="67.93" fill="#3173b8"/><rect x="1236.26" y="919.54" width="9.56" height="63.26" fill="#3173b8"/><rect x="1246.81" y="918.28" width="9.56" height="64.52" fill="#3173b8"/><rect x="1257.37" y="916.01" width="9.56" height="66.79" fill="#3173b8"/><rect x="1267.93" y="932.14" width="9.56" height="50.66" fill="#3173b8"/><rect x="1278.49" y="917.27" width="9.56" height="65.53" fill="#3173b8"/><rect x="1289.04" y="934.66" width="9.56" height="48.14" fill="#3173b8"/><rect x="1299.60" y="921.80" width="9.56" height="61.00" fill="#3173b8"/><rect x="1310.16" y="911.34" width="9.56" height="71.46" fill="#3173b8"/><rect x="1320.71" y="914.87" width="9.56" height="67.93" fill="#3173b8"/><rect x="1331.27" y="932.14" width="9.56" height="50.66" fill="#3173b8"/><rect x="1341.83" y="927.73" width="9.56" height="55.07" fill="#3173b8"/><rect x="1352.38" y="927.73" width="9.56" height="55.07" fill="#3173b8"/><rect x="1362.94" y="913.86" width="9.56" height="68.94" fill="#3173b8"/><rect x="1373.50" y="924.20" width="9.56" height="58.60" fill="#3173b8"/><rect x="1384.06" y="914.87" width="9.56" height="67.93" fill="#3173b8"/><rect x="1394.61" y="905.67" width="9.56" height="77.13" fill="#3173b8"/><rect x="1405.17" y="920.80" width="9.56" height="62.00" fill="#3173b8"/><rect x="1415.73" y="921.80" width="9.56" height="61.00" fill="#3173b8"/><rect x="1426.28" y="912.60" width="9.56" height="70.20" fill="#3173b8"/><rect x="1436.84" y="919.54" width="9.56" height="63.26" fill="#3173b8"/><rect x="1447.40" y="920.80" width="9.56" height="62.00" fill="#3173b8"/><rect x="1457.95" y="927.73" width="9.56" height="55.07" fill="#3173b8"/><rect x="1468.51" y="916.01" width="9.56" height="66.79" fill="#3173b8"/><rect x="1479.07" y="923.06" width="9.56" height="59.74" fill="#3173b8"/><rect x="1489.62" y="932.14" width="9.56" height="50.66" fill="#3173b8"/><rect x="1500.18" y="926.47" width="9.56" height="56.33" fill="#3173b8"/><rect x="1510.74" y="917.27" width="9.56" height="65.53" fill="#3173b8"/><rect x="1521.30" y="924.20" width="9.56" height="58.60" fill="#3173b8"/><rect x="1531.85" y="926.47" width="9.56" height="56.33" fill="#3173b8"/><rect x="1542.41" y="916.01" width="9.56" height="66.79" fill="#3173b8"/><rect x="1552.97" y="920.80" width="9.56" height="62.00" fill="#3173b8"/><rect x="1563.52" y="928.99" width="9.56" height="53.81" fill="#3173b8"/><rect x="1574.08" y="935.92" width="9.56" height="46.88" fill="#3173b8"/><rect x="1584.64" y="918.28" width="9.56" height="64.52" fill="#3173b8"/><rect x="1595.20" y="926.47" width="9.56" height="56.33" fill="#3173b8"/><rect x="1605.75" y="916.01" width="9.56" height="66.79" fill="#3173b8"/><rect x="1616.31" y="916.01" width="9.56" height="66.79" fill="#3173b8"/><rect x="1626.87" y="912.60" width="9.56" height="70.20" fill="#3173b8"/><rect x="1637.42" y="926.47" width="9.56" height="56.33" fill="#3173b8"/><rect x="1647.98" y="924.20" width="9.56" height="58.60" fill="#3173b8"/><rect x="1658.54" y="920.80" width="9.56" height="62.00" fill="#3173b8"/><rect x="1669.09" y="926.47" width="9.56" height="56.33" fill="#3173b8"/><rect x="1679.65" y="917.27" width="9.56" height="65.53" fill="#3173b8"/><rect x="1690.21" y="928.99" width="9.56" height="53.81" fill="#3173b8"/><rect x="1700.77" y="924.20" width="9.56" height="58.60" fill="#3173b8"/><rect x="1711.32" y="919.54" width="9.56" height="63.26" fill="#3173b8"/><rect x="1721.88" y="914.87" width="9.56" height="67.93" fill="#3173b8"/><rect x="1732.44" y="926.47" width="9.56" height="56.33" fill="#3173b8"/><rect x="1742.99" y="914.87" width="9.56" height="67.93" fill="#3173b8"/><rect x="1753.55" y="921.80" width="9.56" height="61.00" fill="#3173b8"/><rect x="1764.11" y="925.21" width="9.56" height="57.59" fill="#3173b8"/><rect x="1774.66" y="924.20" width="9.56" height="58.60" fill="#3173b8"/><rect x="1785.22" y="921.80" width="9.56" height="61.00" fill="#3173b8"/><rect x="1795.78" y="926.47" width="9.56" height="56.33" fill="#3173b8"/><rect x="1806.34" y="918.28" width="9.56" height="64.52" fill="#3173b8"/><rect x="1816.89" y="916.01" width="9.56" height="66.79" fill="#3173b8"/><rect x="1827.45" y="912.60" width="9.56" height="70.20" fill="#3173b8"/><rect x="1838.01" y="920.80" width="9.56" height="62.00" fill="#3173b8"/><rect x="1848.56" y="923.06" width="9.56" height="59.74" fill="#3173b8"/><rect x="1859.12" y="924.20" width="9.56" height="58.60" fill="#3173b8"/><rect x="1869.68" y="914.87" width="9.56" height="67.93" fill="#3173b8"/><rect x="1880.23" y="924.20" width="9.56" height="58.60" fill="#3173b8"/><rect x="1890.79" y="923.06" width="9.56" height="59.74" fill="#3173b8"/><rect x="1901.35" y="930.00" width="9.56" height="52.80" fill="#3173b8"/><rect x="1911.90" y="924.20" width="9.56" height="58.60" fill="#3173b8"/><rect x="1922.46" y="930.00" width="9.56" height="52.80" fill="#3173b8"/><rect x="1933.02" y="916.01" width="9.56" height="66.79" fill="#3173b8"/><rect x="1943.58" y="937.81" width="9.56" height="44.99" fill="#3173b8"/><rect x="1954.13" y="921.80" width="9.56" height="61.00" fill="#3173b8"/><rect x="1964.69" y="921.80" width="9.56" height="61.00" fill="#3173b8"/><rect x="1975.25" y="907.94" width="9.56" height="74.86" fill="#3173b8"/><rect x="1985.80" y="927.73" width="9.56" height="55.07" fill="#3173b8"/><rect x="1996.36" y="940.08" width="9.56" height="42.72" fill="#3173b8"/><rect x="2006.92" y="980.03" width="9.56" height="2.77" fill="#3173b8"/><text x="222.20" y="1005.3" text-anchor="middle" font-family="Liberation Sans" font-size="16" fill="#545b64">08 AM</text><text x="348.90" y="1005.3" text-anchor="middle" font-family="Liberation Sans" font-size="16" fill="#545b64">02 PM</text><text x="475.60" y="1005.3" text-anchor="middle" font-family="Liberation Sans" font-size="16" fill="#545b64">08 PM</text><text x="602.30" y="1005.3" text-anchor="middle" font-family="Liberation Sans" font-size="16" fill="#545b64">02 AM</text><text x="729.00" y="1005.3" text-anchor="middle" font-family="Liberation Sans" font-size="16" fill="#545b64">08 AM</text><text x="855.70" y="1005.3" text-anchor="middle" font-family="Liberation Sans" font-size="16" fill="#545b64">02 PM</text><text x="982.40" y="1005.3" text-anchor="middle" font-family="Liberation Sans" font-size="16" fill="#545b64">08 PM</text><text x="1109.10" y="1005.3" text-anchor="middle" font-family="Liberation Sans" font-size="16" fill="#545b64">02 AM</text><text x="1235.80" y="1005.3" text-anchor="middle" font-family="Liberation Sans" font-size="16" fill="#545b64">08 AM</text><text x="1362.50" y="1005.3" text-anchor="middle" font-family="Liberation Sans" font-size="16" fill="#545b64">02 PM</text><text x="1489.20" y="1005.3" text-anchor="middle" font-family="Liberation Sans" font-size="16" fill="#545b64">08 PM</text><text x="1615.90" y="1005.3" text-anchor="middle" font-family="Liberation Sans" font-size="16" fill="#545b64">02 AM</text><text x="1742.60" y="1005.3" text-anchor="middle" font-family="Liberation Sans" font-size="16" fill="#545b64">08 AM</text><text x="1869.30" y="1005.3" text-anchor="middle" font-family="Liberation Sans" font-size="16" fill="#545b64">02 PM</text><text x="1996.00" y="1005.3" text-anchor="middle" font-family="Liberation Sans" font-size="16" fill="#545b64">08 PM</text><text x="2122.70" y="1005.3" text-anchor="middle" font-family="Liberation Sans" font-size="16" fill="#545b64">02 AM</text><text x="2249.40" y="1005.3" text-anchor="middle" font-family="Liberation Sans" font-size="16" fill="#545b64">08 AM</text><text x="2376.10" y="1005.3" text-anchor="middle" font-family="Liberation Sans" font-size="16" fill="#545b64">02 PM</text><text x="164.9" y="919.60" text-anchor="end" font-family="Liberation Sans" font-size="16" fill="#545b64">60</text><text x="164.9" y="942.40" text-anchor="end" font-family="Liberation Sans" font-size="16" fill="#545b64">40</text><text x="164.9" y="965.30" text-anchor="end" font-family="Liberation Sans" font-size="16" fill="#545b64">20</text><text x="164.9" y="988.00" text-anchor="end" font-family="Liberation Sans" font-size="16" fill="#545b64">0</text></svg>
<div class="r" style="left:104px;top:1034px;width:2356px;height:1px;background:#eaeded"></div>
<div class="r" style="left:104px;top:1035px;width:2356px;height:58px;background:#fafafa"></div>
<div class="r" style="left:104px;top:1093px;width:2356px;height:1px;background:#eaeded"></div>
<div class="r" style="left:543.25px;top:1047px;width:1px;height:33px;background:#eaeded"></div>
<div class="r" style="left:844.5px;top:1047px;width:1px;height:33px;background:#eaeded"></div>
<div class="r" style="left:1078.75px;top:1047px;width:1px;height:33px;background:#eaeded"></div>
<div class="r" style="left:1312.5px;top:1047px;width:1px;height:33px;background:#eaeded"></div>
<div class="r" style="left:1459.5px;top:1047px;width:1px;height:33px;background:#eaeded"></div>
<div class="r" style="left:1579.5px;top:1047px;width:1px;height:33px;background:#eaeded"></div>
<div class="r" style="left:1699.5px;top:1047px;width:1px;height:33px;background:#eaeded"></div>
<div class="r" style="left:1866px;top:1047px;width:1px;height:33px;background:#eaeded"></div>
<div class="t" style="left:117.50px;top:1057.25px;font-size:16px;line-height:16px;color:#16191f;font-weight:normal;font-family:'Liberation Mono', monospace;">#</div>
<div class="t" style="left:238.25px;top:1057.25px;font-size:16px;line-height:16px;color:#16191f;font-weight:normal;font-family:'Liberation Mono', monospace;">traceId</div>
<div class="t" style="left:557.50px;top:1057.25px;font-size:16px;line-height:16px;color:#16191f;font-weight:normal;font-family:'Liberation Mono', monospace;">name</div>
<div class="t" style="left:858.75px;top:1057.25px;font-size:16px;line-height:16px;color:#16191f;font-weight:normal;font-family:'Liberation Mono', monospace;">@timestamp</div>
<div class="t" style="left:1093.00px;top:1057.25px;font-size:16px;line-height:16px;color:#16191f;font-weight:normal;font-family:'Liberation Mono', monospace;">service</div>
<div class="t" style="left:1327.00px;top:1057.25px;font-size:16px;line-height:16px;color:#16191f;font-weight:normal;font-family:'Liberation Mono', monospace;">environment</div>
<div class="t" style="left:1474.25px;top:1057.25px;font-size:16px;line-height:16px;color:#16191f;font-weight:normal;font-family:'Liberation Mono', monospace;">statusCo…</div>
<div class="t" style="left:1594.25px;top:1057.25px;font-size:16px;line-height:16px;color:#16191f;font-weight:normal;font-family:'Liberation Mono', monospace;">duration…</div>
<div class="t" style="left:1714.25px;top:1057.25px;font-size:16px;line-height:16px;color:#16191f;font-weight:normal;font-family:'Liberation Mono', monospace;">spanId</div>
<div class="t" style="left:1880.00px;top:1057.25px;font-size:16px;line-height:16px;color:#16191f;font-weight:normal;font-family:'Liberation Mono', monospace;">@message</div>
<div class="r" style="left:104px;top:1136px;width:2356px;height:38px;background:#f2f3f3"></div>
<svg class="r" style="left:127.5px;top:1110.5px;" width="12" height="14" viewBox="0 0 12 14"><path d="M0.5 0.5 L11.5 7 L0.5 13.5 Z" fill="#16191f"/></svg>
<div class="t" style="left:155.50px;top:1108.25px;font-size:16.5px;line-height:16.5px;color:#16191f;font-weight:normal;font-family:'Liberation Sans', sans-serif;">1</div>
<div class="r" style="left:238px;top:1102px;width:306px;height:28px;overflow:hidden"><div class="t" style="left:0.5px;top:5.78px;font-size:16.8px;line-height:16.8px;color:#2f70b6;white-space:nowrap">672ef8b35ff37e5000cb5ab6726ad522&nbsp;</div><div class="r" style="left:0;top:23.5px;width:288.5px;height:1.5px;background:#2f70b6"></div><div class="r" style="left:289.3px;top:18px;width:9px;height:2px;background:repeating-linear-gradient(90deg,#16191f 0 2px,transparent 2px 3.5px)"></div><svg class="r" style="left:290px;top:5px" width="19" height="19" viewBox="0 0 19 19"><path d="M7.5 2 L2 2 L2 17 L17 17 L17 11.5" stroke="#2f70b6" stroke-width="3" fill="none"/><path d="M11 2 L17 2 L17 8" stroke="#2f70b6" stroke-width="3" fill="none"/><path d="M16.5 2.5 L9 10" stroke="#2f70b6" stroke-width="2.8"/></svg></div>
<div class="t" style="left:559.50px;top:1110.00px;font-size:16px;line-height:16px;color:#16191f;font-weight:normal;font-family:'Liberation Mono', monospace;">lambda_function.lambda_handl…</div>
<div class="t" style="left:860.00px;top:1110.00px;font-size:16px;line-height:16px;color:#16191f;font-weight:normal;font-family:'Liberation Mono', monospace;">2024-11-09T05:52:51.8…</div>
<div class="t" style="left:1093.50px;top:1108.10px;font-size:16.8px;line-height:16.8px;color:#2f70b6;font-weight:normal;font-family:'Liberation Sans', sans-serif;">appointment-service-get</div>
<div class="r" style="left:1093.5px;top:1125.5px;width:184px;height:1.5px;background:#2f70b6"></div>
<svg class="r" style="left:1279.5px;top:1107px;" width="19" height="19" viewBox="0 0 19 19"><path d="M7.5 2 L2 2 L2 17 L17 17 L17 11.5" stroke="#2f70b6" stroke-width="3" fill="none"/><path d="M11 2 L17 2 L17 8" stroke="#2f70b6" stroke-width="3" fill="none"/><path d="M16.5 2.5 L9 10" stroke="#2f70b6" stroke-width="2.8"/></svg>
<div class="t" style="left:1327.00px;top:1110.00px;font-size:16px;line-height:16px;color:#16191f;font-weight:normal;font-family:'Liberation Mono', monospace;">lambda:defau…</div>
<div class="t" style="left:1595.00px;top:1110.00px;font-size:16px;line-height:16px;color:#16191f;font-weight:normal;font-family:'Liberation Mono', monospace;">1 ms</div>
<div class="t" style="left:1714.50px;top:1110.00px;font-size:16px;line-height:16px;color:#16191f;font-weight:normal;font-family:'Liberation Mono', monospace;">0ece1c66410d37…</div>
<div class="t" style="left:1882.50px;top:1110.00px;font-size:16px;line-height:16px;color:#16191f;font-weight:normal;font-family:'Liberation Mono', monospace;">{&quot;resource&quot;:{&quot;attributes&quot;:{&quot;telemetry.sdk.language&quot;:&quot;python&quot;,&quot;service.name&quot;:&quot;appointment-service-get&quot;}}}</div>
<svg class="r" style="left:127.5px;top:1148.5px;" width="12" height="14" viewBox="0 0 12 14"><path d="M0.5 0.5 L11.5 7 L0.5 13.5 Z" fill="#16191f"/></svg>
<div class="t" style="left:155.50px;top:1146.25px;font-size:16.5px;line-height:16.5px;color:#16191f;font-weight:normal;font-family:'Liberation Sans', sans-serif;">2</div>
<div class="r" style="left:238px;top:1140px;width:306px;height:28px;overflow:hidden"><div class="t" style="left:0.5px;top:5.78px;font-size:16.8px;line-height:16.8px;color:#2f70b6;white-space:nowrap">672ef8b86d0bddf41ac86a0472656bdd&nbsp;</div><div class="r" style="left:0;top:23.5px;width:293.5px;height:1.5px;background:#2f70b6"></div><div class="r" style="left:294.3px;top:18px;width:9px;height:2px;background:repeating-linear-gradient(90deg,#16191f 0 2px,transparent 2px 3.5px)"></div><svg class="r" style="left:295px;top:5px" width="19" height="19" viewBox="0 0 19 19"><path d="M7.5 2 L2 2 L2 17 L17 17 L17 11.5" stroke="#2f70b6" stroke-width="3" fill="none"/><path d="M11 2 L17 2 L17 8" stroke="#2f70b6" stroke-width="3" fill="none"/><path d="M16.5 2.5 L9 10" stroke="#2f70b6" stroke-width="2.8"/></svg></div>
<div class="t" style="left:559.50px;top:1148.00px;font-size:16px;line-height:16px;color:#16191f;font-weight:normal;font-family:'Liberation Mono', monospace;">lambda_function.lambda_handl…</div>
<div class="t" style="left:860.00px;top:1148.00px;font-size:16px;line-height:16px;color:#16191f;font-weight:normal;font-family:'Liberation Mono', monospace;">2024-11-09T05:52:56.9…</div>
<div class="t" style="left:1093.50px;top:1146.10px;font-size:16.8px;line-height:16.8px;color:#2f70b6;font-weight:normal;font-family:'Liberation Sans', sans-serif;">appointment-service-get</div>
<div class="r" style="left:1093.5px;top:1163.5px;width:184px;height:1.5px;background:#2f70b6"></div>
<svg class="r" style="left:1279.5px;top:1145px;" width="19" height="19" viewBox="0 0 19 19"><path d="M7.5 2 L2 2 L2 17 L17 17 L17 11.5" stroke="#2f70b6" stroke-width="3" fill="none"/><path d="M11 2 L17 2 L17 8" stroke="#2f70b6" stroke-width="3" fill="none"/><path d="M16.5 2.5 L9 10" stroke="#2f70b6" stroke-width="2.8"/></svg>
<div class="t" style="left:1327.00px;top:1148.00px;font-size:16px;line-height:16px;color:#16191f;font-weight:normal;font-family:'Liberation Mono', monospace;">lambda:defau…</div>
<div class="t" style="left:1595.00px;top:1148.00px;font-size:16px;line-height:16px;color:#16191f;font-weight:normal;font-family:'Liberation Mono', monospace;">1 ms</div>
<div class="t" style="left:1714.50px;top:1148.00px;font-size:16px;line-height:16px;color:#16191f;font-weight:normal;font-family:'Liberation Mono', monospace;">abdb7862834d69…</div>
<div class="t" style="left:1882.50px;top:1148.00px;font-size:16px;line-height:16px;color:#16191f;font-weight:normal;font-family:'Liberation Mono', monospace;">{&quot;resource&quot;:{&quot;attributes&quot;:{&quot;telemetry.sdk.language&quot;:&quot;python&quot;,&quot;service.name&quot;:&quot;appointment-service-get&quot;}}}</div>
</body></html>
